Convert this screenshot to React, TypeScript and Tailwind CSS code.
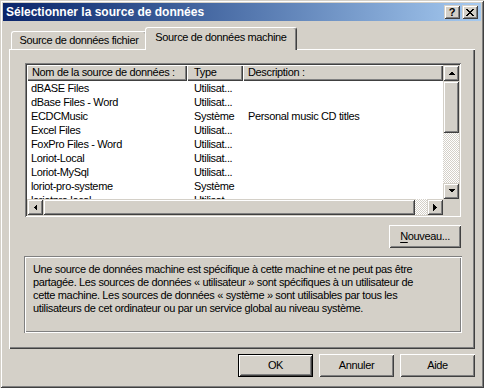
import React from "react";

const win =
  "shadow-[inset_1px_1px_0_#d4d0c8,inset_-1px_-1px_0_#404040,inset_2px_2px_0_#ffffff,inset_-2px_-2px_0_#808080]";
const sbBtn =
  "shadow-[inset_1px_1px_0_#d4d0c8,inset_-1px_-1px_0_#404040,inset_2px_2px_0_#ffffff,inset_-2px_-2px_0_#808080]";
const pushBtn =
  "shadow-[inset_1px_1px_0_#ffffff,inset_-1px_-1px_0_#404040,inset_2px_2px_0_#d4d0c8,inset_-2px_-2px_0_#808080]";
const sunken =
  "shadow-[inset_1px_1px_0_#808080,inset_-1px_-1px_0_#ffffff,inset_2px_2px_0_#404040,inset_-2px_-2px_0_#d4d0c8]";
const etched =
  "shadow-[inset_1px_1px_0_#808080,inset_-1px_-1px_0_#ffffff,inset_2px_2px_0_#ffffff,inset_-2px_-2px_0_#808080]";
const header =
  "shadow-[inset_1px_1px_0_#ffffff,inset_-1px_-1px_0_#404040,inset_-2px_-2px_0_#808080]";
const dither =
  "[background-image:conic-gradient(#ffffff_25%,#d4d0c8_0_50%,#ffffff_0_75%,#d4d0c8_0)] [background-size:2px_2px]";

function Tri({ dir }: { dir: "up" | "down" | "left" | "right" }) {
  const pts: Record<string, string> = {
    up: "0,4 7,4 3.5,0.5",
    down: "0,0 7,0 3.5,3.5",
    left: "4,0 4,7 0.5,3.5",
    right: "0,0 0,7 3.5,3.5",
  };
  const vertical = dir === "up" || dir === "down";
  return (
    <svg
      width={vertical ? 7 : 4}
      height={vertical ? 4 : 7}
      viewBox={vertical ? "0 0 7 4" : "0 0 4 7"}
      shapeRendering="crispEdges"
    >
      <polygon points={pts[dir]} fill="#000" />
    </svg>
  );
}

const rows: [string, string, string][] = [
  ["dBASE Files", "Utilisat...", ""],
  ["dBase Files - Word", "Utilisat...", ""],
  ["ECDCMusic", "Système", "Personal music CD titles"],
  ["Excel Files", "Utilisat...", ""],
  ["FoxPro Files - Word", "Utilisat...", ""],
  ["Loriot-Local", "Utilisat...", ""],
  ["Loriot-MySql", "Utilisat...", ""],
  ["loriot-pro-systeme", "Système", ""],
  ["loriotpro.local", "Utilisat...", ""],
];

export default function App() {
  return (
    <div
      className={`w-[484px] h-[388px] bg-[#d4d0c8] p-[3px] flex flex-col text-[11px] tracking-[-0.35px] text-black font-['Liberation_Sans',Arial,sans-serif] ${win}`}
    >
      {/* Title bar */}
      <div className="h-[18px] flex items-center bg-linear-to-r from-[#0a246a] to-[#a6caf0] pl-[3px] pr-[3px]">
        <span className="text-white font-bold text-[12px] tracking-normal leading-[18px] whitespace-nowrap flex-1">
          Sélectionner la source de données
        </span>
        <div className="flex gap-[2px]">
          <div
            className={`w-[16px] h-[14px] bg-[#d4d0c8] flex items-center justify-center ${sbBtn}`}
          >
            <span className="font-bold text-[11px] tracking-normal leading-[11px] pt-px">?</span>
          </div>
          <div
            className={`w-[16px] h-[14px] bg-[#d4d0c8] flex items-center justify-center ${sbBtn}`}
          >
            <svg width="8" height="7" viewBox="0 0 8 7" shapeRendering="crispEdges">
              <path d="M0 0h2v1h-2zM6 0h2v1h-2zM1 1h2v1h-2zM5 1h2v1h-2zM2 2h4v1h-4zM3 3h2v1h-2zM2 4h4v1h-4zM1 5h2v1h-2zM5 5h2v1h-2zM0 6h2v1h-2zM6 6h2v1h-2z" fill="#000" />
            </svg>
          </div>
        </div>
      </div>

      {/* Tabs */}
      <div className="flex items-end h-[22px] mt-[6px] ml-[6px]">
        <div className="ml-[2px] w-[136px] h-[18px] border-l border-t border-white rounded-tl-[3px] rounded-tr-[3px] border-r border-r-[#404040] shadow-[inset_-1px_0_0_#808080] text-center leading-[17px] whitespace-nowrap">
          Source de données fichier
        </div>
        <div className="relative z-10 -ml-[2px] -mb-px w-[152px] h-[23px] bg-[#d4d0c8] border-l border-t border-white rounded-tl-[3px] rounded-tr-[3px] border-r border-r-[#404040] shadow-[inset_-1px_0_0_#808080] text-center leading-[19px] whitespace-nowrap">
          Source de données machine
        </div>
      </div>

      {/* Panel */}
      <div className="ml-[6px] w-[466px] h-[300px] flex flex-col shadow-[inset_1px_1px_0_#ffffff,inset_-1px_-1px_0_#404040,inset_-2px_-2px_0_#808080]">
        {/* List view */}
        <div className={`mt-[14px] ml-[16px] w-[436px] h-[154px] p-[2px] ${sunken}`}>
          <div className="w-full h-full grid grid-cols-[416px_16px] grid-rows-[134px_16px] bg-white">
            <div className="overflow-hidden">
              <div className="flex h-[16px] bg-[#d4d0c8] leading-[15px]">
                <div className={`w-[160px] pl-[5px] whitespace-nowrap overflow-hidden ${header}`}>
                  Nom de la source de données :
                </div>
                <div className={`w-[56px] pl-[7px] whitespace-nowrap ${header}`}>Type</div>
                <div className={`w-[200px] pl-[5px] whitespace-nowrap ${header}`}>
                  Description :
                </div>
              </div>
              {rows.map((r) => (
                <div key={r[0]} className="flex h-[14px] leading-[14px] whitespace-nowrap">
                  <div className="w-[160px] pl-[4px]">{r[0]}</div>
                  <div className="w-[56px] pl-[7px]">{r[1]}</div>
                  <div className="w-[200px] pl-[5px]">{r[2]}</div>
                </div>
              ))}
            </div>
            {/* Vertical scrollbar */}
            <div className="flex flex-col">
              <div className={`h-[16px] bg-[#d4d0c8] flex items-center justify-center ${sbBtn}`}>
                <Tri dir="up" />
              </div>
              <div className={`h-[52px] bg-[#d4d0c8] ${sbBtn}`} />
              <div className={`flex-1 ${dither}`} />
              <div className={`h-[16px] bg-[#d4d0c8] flex items-center justify-center ${sbBtn}`}>
                <Tri dir="down" />
              </div>
            </div>
            {/* Horizontal scrollbar */}
            <div className="flex">
              <div className={`w-[16px] bg-[#d4d0c8] flex items-center justify-center ${sbBtn}`}>
                <Tri dir="left" />
              </div>
              <div className={`w-[372px] bg-[#d4d0c8] ${sbBtn}`} />
              <div className={`flex-1 ${dither}`} />
              <div className={`w-[16px] bg-[#d4d0c8] flex items-center justify-center ${sbBtn}`}>
                <Tri dir="right" />
              </div>
            </div>
            <div className="bg-[#d4d0c8]" />
          </div>
        </div>

        {/* Nouveau */}
        <div
          className={`mt-[8px] ml-[380px] w-[72px] h-[23px] bg-[#d4d0c8] flex items-center justify-center ${pushBtn}`}
        >
          <span>
            <span className="underline underline-offset-[2px]">N</span>ouveau...
          </span>
        </div>

        {/* Description group */}
        <div className={`mt-[8px] ml-[15px] w-[438px] h-[77px] pl-[9px] pt-[7px] leading-[13px] ${etched}`}>
          <span className="block whitespace-nowrap">
            Une source de données machine est spécifique à cette machine et ne peut pas être
          </span>
          <span className="block whitespace-nowrap">
            partagée. Les sources de données « utilisateur » sont spécifiques à un utilisateur de
          </span>
          <span className="block whitespace-nowrap">
            cette machine. Les sources de données « système » sont utilisables par tous les
          </span>
          <span className="block whitespace-nowrap">
            utilisateurs de cet ordinateur ou par un service global au niveau système.
          </span>
        </div>
      </div>

      {/* Bottom buttons */}
      <div className="mt-[5px] flex justify-end gap-[6px] pr-[6px]">
        <div
          className={`w-[75px] h-[23px] bg-[#d4d0c8] border border-black flex items-center justify-center ${pushBtn}`}
        >
          OK
        </div>
        <div className={`w-[75px] h-[23px] bg-[#d4d0c8] flex items-center justify-center ${pushBtn}`}>
          Annuler
        </div>
        <div className={`w-[75px] h-[23px] bg-[#d4d0c8] flex items-center justify-center ${pushBtn}`}>
          Aide
        </div>
      </div>
    </div>
  );
}
